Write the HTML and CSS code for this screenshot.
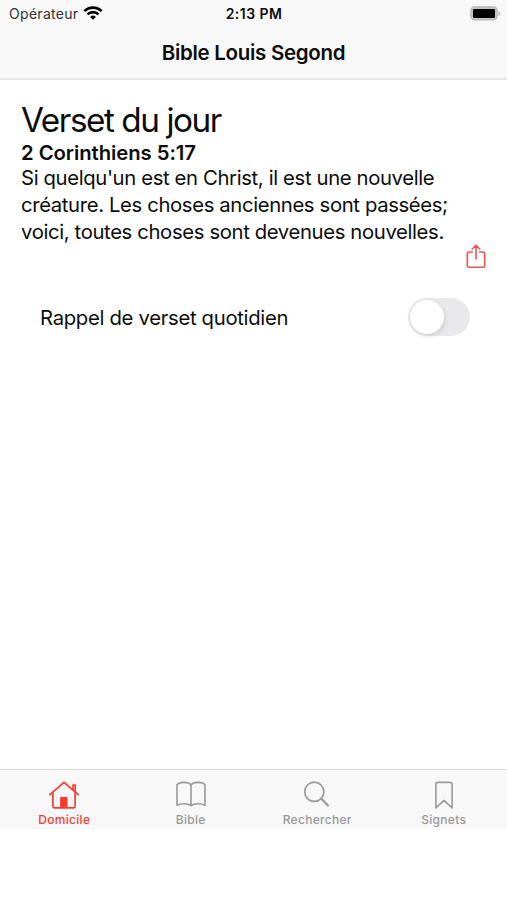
FILE: index.html
```html
<!DOCTYPE html>
<html lang="fr">
<head>
<meta charset="utf-8">
<title>Bible Louis Segond</title>
<link rel="stylesheet" href="styles.css">
</head>
<body>
<header class="top">
  <div class="status">
    <div class="carrier"><span>Opérateur</span>
      <svg class="wifi" width="20" height="14" viewBox="0 0 20 14" fill="none" stroke="#000" stroke-width="2.7"><path d="M1.4 5.1a12.3 12.3 0 0 1 17.2 0M4.5 8.4a7.8 7.8 0 0 1 11 0"/><path d="M10 13.8 7.1 10.9a4.2 4.2 0 0 1 5.8 0z" fill="#000" stroke="none"/></svg>
    </div>
    <time class="clock">2:13 PM</time>
    <svg class="battery" width="31" height="15" viewBox="0 0 31 15"><rect x=".8" y=".8" width="26.4" height="13.2" rx="4" fill="#c4c4c4" stroke="#b8b8b8" stroke-width="1.2"/><rect x="3" y="3" width="22" height="9" rx="1.3" fill="#000"/><path d="M28.6 5v5c1-.4 1.7-1.3 1.7-2.5S29.6 5.400 28.600 5z" fill="#b3b3b3"/></svg>
  </div>
  <h1 class="nav-title">Bible Louis Segond</h1>
</header>
<main class="content">
  <h2 class="heading">Verset du jour</h2>
  <h3 class="reference">2 Corinthiens 5:17</h3>
  <p class="verse">Si quelqu'un est en Christ, il est une nouvelle<br>créature. Les choses anciennes sont passées;<br>voici, toutes choses sont devenues nouvelles.</p>
  <button class="share" aria-label="Partager">
    <svg width="20" height="25" viewBox="0 0 20 25" fill="none" stroke="#f4554e" stroke-width="1.6" stroke-linecap="round" stroke-linejoin="round"><path d="M6.300 8H3.300A2 2 0 0 0 1.300 10v11.200a2 2 0 0 0 2 2h13.400a2 2 0 0 0 2-2V10a2 2 0 0 0-2-2h-3M10 15V1.300M6.200 5 10 1.200 13.800 5"/></svg>
  </button>
  <div class="reminder"><span class="label">Rappel de verset quotidien</span><span class="switch"><span class="knob"></span></span></div>
</main>
<nav class="tabs">
  <a class="tab active">
    <svg width="32" height="32" viewBox="0 0 32 32" fill="none" stroke="currentColor" stroke-width="1.700" stroke-linecap="round" stroke-linejoin="round"><path d="M1.800 15.700 16 3.300l14.200 12.400M4.900 13.500V27.300a1.600 1.600 0 0 0 1.600 1.600h19a1.600 1.600 0 0 0 1.600-1.600V13.500M25 10.500V6.200h2.200v6.200"/><path d="M13 18.500h6V28.500h-6z" fill="currentColor" stroke-width="1"/></svg>
    <span>Domicile</span></a>
  <a class="tab">
    <svg width="32" height="32" viewBox="0 0 32 32" fill="none" stroke="currentColor" stroke-width="1.600" stroke-linecap="round" stroke-linejoin="round"><path d="M16 6v21M16 6C13.500 2.600 4.500 2.500 2 5.700V26.300C5 24.300 13 23.800 16 26.800 19 23.800 27 24.300 30 26.300V5.700C27.500 2.500 18.500 2.600 16 6z"/></svg>
    <span>Bible</span></a>
  <a class="tab">
    <svg width="32" height="32" viewBox="0 0 32 32" fill="none" stroke="currentColor" stroke-linecap="round"><circle cx="13.300" cy="12.800" r="9.600" stroke-width="1.700"/><path d="m20.300 19.800 6.700 6.700" stroke-width="2.200"/></svg>
    <span>Rechercher</span></a>
  <a class="tab">
    <svg width="32" height="32" viewBox="0 0 32 32" fill="none" stroke="currentColor" stroke-width="1.600" stroke-linejoin="round"><path d="M7.900 29V5.200a1.800 1.800 0 0 1 1.800-1.800H22.300a1.800 1.800 0 0 1 1.800 1.800V29L16 21.300z"/></svg>
    <span>Signets</span></a>
</nav>
</body>
</html>
```
FILE: styles.css
```css
* { box-sizing: border-box; }
body {
  margin: 0;
  height: 900px;
  display: flex;
  flex-direction: column;
  background: #fff;
  color: #0c0c0c;
  font-family: Inter, "Liberation Sans", sans-serif;
  overflow: hidden;
}
h1, h2, h3, p { margin: 0; font-weight: 400; white-space: nowrap; }
.top { height: 80px; background: #f8f8f8; border-bottom: 2px solid #e6e6e6; }
.status {
  height: 27px;
  display: grid;
  grid-template-columns: 1fr auto 1fr;
  align-items: center;
  padding: 0 6px 0 9px;
  font-size: 14px;
}
.carrier { display: flex; align-items: center; gap: 5px; color: #333; letter-spacing: .3px; }
.wifi { margin-top: -2px; }
.clock { font-weight: 600; font-size: 14px; letter-spacing: .45px; margin-left: -2px; }
.battery { justify-self: end; }
.nav-title { text-align: center; font-size: 20.5px; font-weight: 600; line-height: 51px; letter-spacing: -.29px; }
.content { flex: 1; padding: 20px 21px 0; }
.heading { font-size: 33.3px; line-height: 40px; letter-spacing: -1.45px; }
.reference { font-size: 20.3px; line-height: 25px; font-weight: 600; letter-spacing: -.06px; }
.verse { font-size: 20.3px; line-height: 26.8px; letter-spacing: -.365px; }
.share { display: block; width: 20px; height: 25px; margin: -1px 0 0 auto; padding: 0; border: 0; background: none; }
.share svg { display: block; }
.reminder { display: flex; align-items: center; justify-content: space-between; margin: 29px 16px 0 19px; height: 38px; font-size: 20.3px; letter-spacing: -.31px; }
.switch { width: 62px; height: 38px; padding: 2px; border-radius: 19px; background: #e9e9eb; }
.knob { display: block; width: 34px; height: 34px; border-radius: 50%; background: #fff; box-shadow: 1px 2px 5px rgba(0, 0, 0, .13); }
.tabs { display: grid; grid-template-columns: repeat(4, 1fr); height: 60px; padding-left: 1px; margin-bottom: 71px; background: #f8f8f8; border-top: 1px solid #d8d8d8; }
.tab { display: flex; flex-direction: column; align-items: center; padding-top: 9px; color: #999; font-size: 12px; font-weight: 500; line-height: 18px; letter-spacing: .3px; }
.active { color: #fb3b30; }
```
